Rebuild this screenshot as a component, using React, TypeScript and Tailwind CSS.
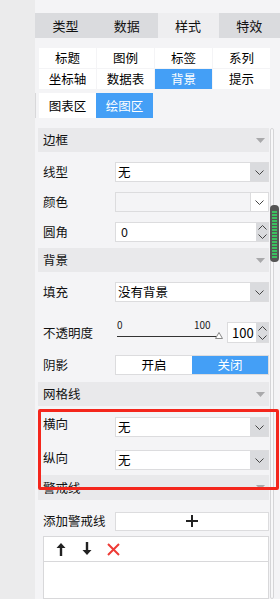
import React from 'react';

const BLUE = 'bg-[#449ff6] text-white';

const Chevron: React.FC<{ up?: boolean }> = ({ up }) => (
  <svg width="9" height="5" viewBox="0 0 9 5" className={up ? 'rotate-180' : ''}>
    <path d="M0.5 0.5 L4.5 4.5 L8.5 0.5" fill="none" stroke="#444" strokeWidth="1" />
  </svg>
);

const Caret = () => (
  <svg width="9" height="5" viewBox="0 0 9 5">
    <path d="M0 0 L9 0 L4.5 5 Z" fill="#a9a9ab" />
  </svg>
);

const Header: React.FC<{ title: string; h?: string }> = ({ title, h = 'h-[24px]' }) => (
  <div className={`${h} bg-[#e9e9eb] flex items-center justify-between pl-[5px] pr-[4px] text-[12.5px] leading-[20px] text-[#111]`}>
    <span>{title}</span>
    <Caret />
  </div>
);

const Select: React.FC<{ value?: string; disabled?: boolean }> = ({ value, disabled }) => (
  <div
    className={`flex-1 h-[20px] flex border border-[#dcdcde] ${disabled ? 'bg-[#f4f4f6]' : 'bg-white'}`}
  >
    <div className="flex-1 pl-[2px] text-[12.5px] leading-[18px] text-black">{value}</div>
    <div
      className={`w-[18px] flex items-center justify-center ${disabled ? 'bg-white border-l border-[#dcdcde]' : 'bg-[#dadbde]'}`}
    >
      <Chevron />
    </div>
  </div>
);

const Spinner = () => (
  <div className="w-[12px] bg-[#dadbde] flex flex-col items-center justify-center gap-[4px]">
    <Chevron up />
    <Chevron />
  </div>
);

const Row: React.FC<{ label: string; mt?: string; shift?: string; children: React.ReactNode }> = ({
  label,
  mt = 'mt-[10px]',
  shift = '',
  children,
}) => (
  <div className={`${mt} flex items-center`}>
    <div className={`w-[77px] pl-[5px] text-[12.5px] leading-[20px] text-[#111] ${shift}`}>{label}</div>
    {children}
  </div>
);

const App: React.FC = () => {
  const tabs = ['类型', '数据', '样式', '特效'];
  const subTabs = ['标题', '图例', '标签', '系列', '坐标轴', '数据表', '背景', '提示'];

  return (
    <div
      className="relative w-[280px] h-[599px] overflow-hidden flex bg-[#ebebec]"
      style={{ fontFamily: '"Noto Sans CJK SC", "Liberation Sans", sans-serif' }}
    >
      <div className="w-[35px] shrink-0 bg-[#ebebec]" />
      <div className="flex-1 bg-[#f4f4f6] pt-[13px] flex flex-col">
        {/* top tabs */}
        <div className="flex h-[25px] text-[13px] leading-[20px] text-[#111]">
          {tabs.map((t, i) => (
            <div
              key={t}
              className={`flex-1 flex items-center justify-center ${i === 2 ? 'bg-[#eeeef0]' : 'bg-[#dadbde]'}`}
            >
              {t}
            </div>
          ))}
        </div>

        {/* sub tabs */}
        <div className="mt-[10px] ml-[4px] w-[231px] grid grid-cols-4 gap-[1px] text-[12.5px] leading-[20px]">
          {subTabs.map((t, i) => (
            <div
              key={t}
              className={`h-[20px] flex items-center justify-center ${i === 6 ? BLUE : 'bg-white text-black'}`}
            >
              {t}
            </div>
          ))}
        </div>
        <div className="mt-[4px] flex h-[25px] border-l border-[#d8d8da] pl-[3px] text-[12.5px] leading-[20px]">
          <div className="w-[57px] bg-white flex items-center justify-center">图表区</div>
          <div className={`w-[57px] flex items-center justify-center ${BLUE}`}>绘图区</div>
        </div>

        {/* property panel */}
        <div className="mt-[10px] flex-1 flex overflow-hidden">
          <div className="w-[231px] ml-[3px] flex flex-col">
            <Header title="边框" />
            <Row label="线型">
              <Select value="无" />
            </Row>
            <Row label="颜色">
              <Select disabled />
            </Row>
            <Row label="圆角">
              <div className="flex-1 h-[20px] flex border border-[#dcdcde] bg-white">
                <div className="flex-1 pl-[5px] text-[12.5px] leading-[18px] text-[#111]">0</div>
                <Spinner />
              </div>
            </Row>

            <div className="mt-[6px]">
              <Header title="背景" />
            </div>
            <Row label="填充">
              <Select value="没有背景" />
            </Row>
            <Row label="不透明度" mt="mt-[20px]">
              <div className="w-[110px] h-[21px] relative">
                <span className="absolute left-[2px] top-[-4px] text-[10px] leading-[14px] text-[#222]">0</span>
                <span className="absolute left-[79px] top-[-4px] text-[10px] leading-[14px] text-[#222]">100</span>
                <div className="absolute left-[2px] top-[14px] w-[100px] h-[1px] bg-[#333]" />
                <svg className="absolute left-[100px] top-[10px]" width="8" height="7" viewBox="0 0 8 7">
                  <path d="M4 0.5 L7.5 6.5 L0.5 6.5 Z" fill="white" stroke="#888" strokeWidth="1" />
                </svg>
              </div>
              <div className="ml-[2px] flex-1 h-[21px] flex border border-[#dcdcde] bg-white">
                <div className="flex-1 pl-[4px] text-[13px] leading-[19px] text-black">100</div>
                <Spinner />
              </div>
            </Row>
            <Row label="阴影" mt="mt-[12px]">
              <div className="flex-1 h-[20px] flex border border-[#dcdcde] text-[12.5px] leading-[18px]">
                <div className="flex-1 bg-white flex items-center justify-center text-black">开启</div>
                <div className={`flex-1 flex items-center justify-center ${BLUE}`}>关闭</div>
              </div>
            </Row>

            <div className="mt-[7px]">
              <Header title="网格线" />
            </div>
            <Row label="横向" mt="mt-[11px]" shift="-mt-[6px]">
              <Select value="无" />
            </Row>
            <Row label="纵向" mt="mt-[13px]" shift="-mt-[4px]">
              <Select value="无" />
            </Row>

            <div className="mt-[5px]">
              <Header title="警戒线" h="h-[25px]" />
            </div>
            <Row label="添加警戒线" mt="mt-[11px]">
              <div className="flex-1 h-[19px] bg-white border border-[#dcdcde] flex items-center justify-center">
                <svg width="12" height="12" viewBox="0 0 12 12">
                  <path d="M6 0 V12 M0 6 H12" stroke="#222" strokeWidth="2" />
                </svg>
              </div>
            </Row>
            <div className="mt-[5px] ml-[5px] flex-1 bg-white border border-[#d8d8da]">
              <div className="h-[25px] border-b border-[#d8d8da] flex items-center gap-[14px] pl-[11px]">
                <svg width="12" height="14" viewBox="0 0 12 14">
                  <path d="M6 1 L1.5 6 H4.8 V14 H7.2 V6 H10.5 Z" fill="#222" />
                </svg>
                <svg width="12" height="14" viewBox="0 0 12 14">
                  <path d="M6 13 L1.5 8 H4.8 V0 H7.2 V8 H10.5 Z" fill="#222" />
                </svg>
                <svg width="13" height="13" viewBox="0 0 13 13">
                  <path d="M1 1 L12 12 M12 1 L1 12" stroke="#ee3b36" strokeWidth="2" />
                </svg>
              </div>
            </div>
          </div>

          {/* scrollbar */}
          <div className="ml-[1px] w-[9px] relative">
            <div className="absolute left-0 top-0 bottom-0 w-[4px] rounded-full border border-[#d5d5d7] bg-[#f8f8f9]" />
            <div className="absolute left-0 top-[77px] w-[9px] h-[57px] rounded-[4px] bg-[#555] p-[2px] pt-[6px] pb-[3px]">
              <div className="w-full h-full bg-[repeating-linear-gradient(to_bottom,#3cc060_0px,#3cc060_2px,#555_2px,#555_3px)]" />
            </div>
          </div>
        </div>
      </div>

      {/* red annotation box */}
      <div className="absolute left-[38px] top-[409px] w-[241px] h-[81px] border-[3px] border-[#f4261c] rounded-[2px] pointer-events-none" />
    </div>
  );
};

export default App;
